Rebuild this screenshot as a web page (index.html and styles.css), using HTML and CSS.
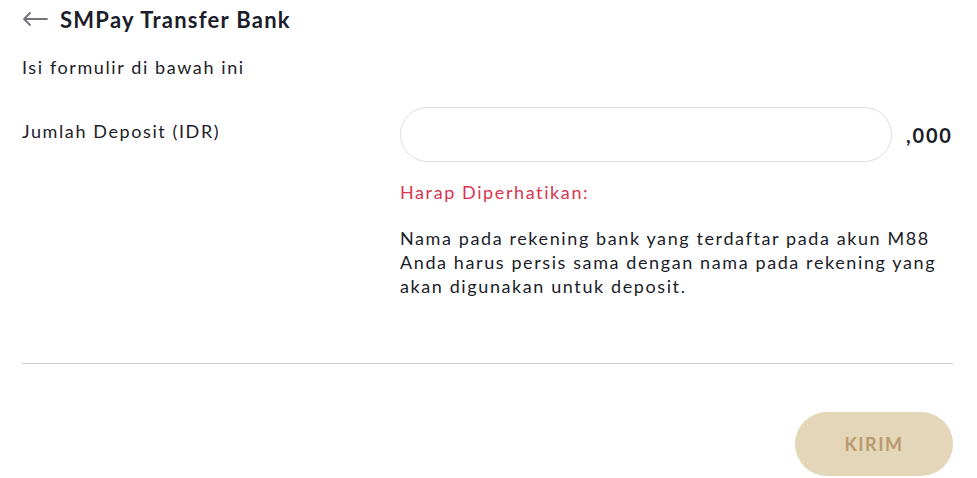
FILE: index.html
```html
<!DOCTYPE html>
<html lang="id">
<head>
  <meta charset="UTF-8" />
  <title>SMPay Transfer Bank</title>
  <meta name="viewport" content="width=device-width, initial-scale=1.0"/>
  <link rel="stylesheet" href="styles.css">
</head>
<body>

<div class="page">
  <div class="header">
    <span class="back">
      <svg width="26" height="14" viewBox="0 0 26 14">
        <path d="M25 7H2M8 1L2 7l6 6" fill="none" stroke="#74747c" stroke-width="1.8" stroke-linecap="round" stroke-linejoin="round"/>
      </svg>
    </span>
    <h1>SMPay Transfer Bank</h1>
  </div>

  <p class="intro">Isi formulir di bawah ini</p>

  <div class="form-row">
    <label for="amount">Jumlah Deposit (IDR)</label>
    <div class="field">
      <div class="amount-line">
        <input type="text" id="amount" class="amount-input">
        <span class="suffix">,000</span>
      </div>
      <p class="notice-title">Harap Diperhatikan:</p>
      <p class="notice-text">Nama pada rekening bank yang terdaftar pada akun M88 Anda harus persis sama dengan nama pada rekening yang akan digunakan untuk deposit.</p>
    </div>
  </div>

  <hr class="divider">

  <div class="actions">
    <button class="submit" disabled>KIRIM</button>
  </div>
</div>

</body>
</html>
```

FILE: styles.css
```css
body {
  font-family: 'Lato', 'Noto Sans', sans-serif;
  margin: 0;
  background: #fff;
  color: #1b1d2a;
}

.page {
  padding: 0 24px 0 22px;
}

.header {
  display: flex;
  align-items: center;
  gap: 12px;
  height: 38px;
}

.back {
  display: flex;
  align-items: center;
}

h1 {
  margin: 0;
  font-size: 22px;
  font-weight: 700;
  letter-spacing: 1.25px;
  color: #1b1d2a;
}

.intro,
.form-row label,
.notice-title,
.notice-text {
  font-size: 18px;
  line-height: 24px;
  letter-spacing: 1.6px;
}

.intro {
  margin: 17px 0 0;
}

.form-row {
  display: grid;
  grid-template-columns: 378px 1fr;
  margin-top: 28px;
}

.form-row label {
  padding-top: 12px;
}

.amount-line {
  display: flex;
  align-items: center;
  gap: 14px;
}

.amount-input {
  width: 492px;
  height: 55px;
  box-sizing: border-box;
  border: 1px solid #dedede;
  border-radius: 28px;
  padding: 0 24px;
  font-family: inherit;
  font-size: 18px;
  outline: none;
}

.suffix {
  font-size: 20px;
  font-weight: 700;
  letter-spacing: 1.8px;
  color: #1b1d2a;
}

.notice-title {
  margin: 18px 0 0;
  color: #d9364f;
}

.notice-text {
  margin: 22px 0 0;
  width: 548px;
}

.divider {
  border: none;
  border-top: 1px solid #d0d0d0;
  margin: 65px 0 0;
}

.actions {
  display: flex;
  justify-content: flex-end;
  margin-top: 48px;
}

.submit {
  width: 158px;
  height: 64px;
  border: none;
  border-radius: 32px;
  background: #e3d6b9;
  color: #b99a6e;
  font-family: 'Lato', sans-serif;
  font-size: 18px;
  font-weight: 700;
  letter-spacing: 1.5px;
}
```
